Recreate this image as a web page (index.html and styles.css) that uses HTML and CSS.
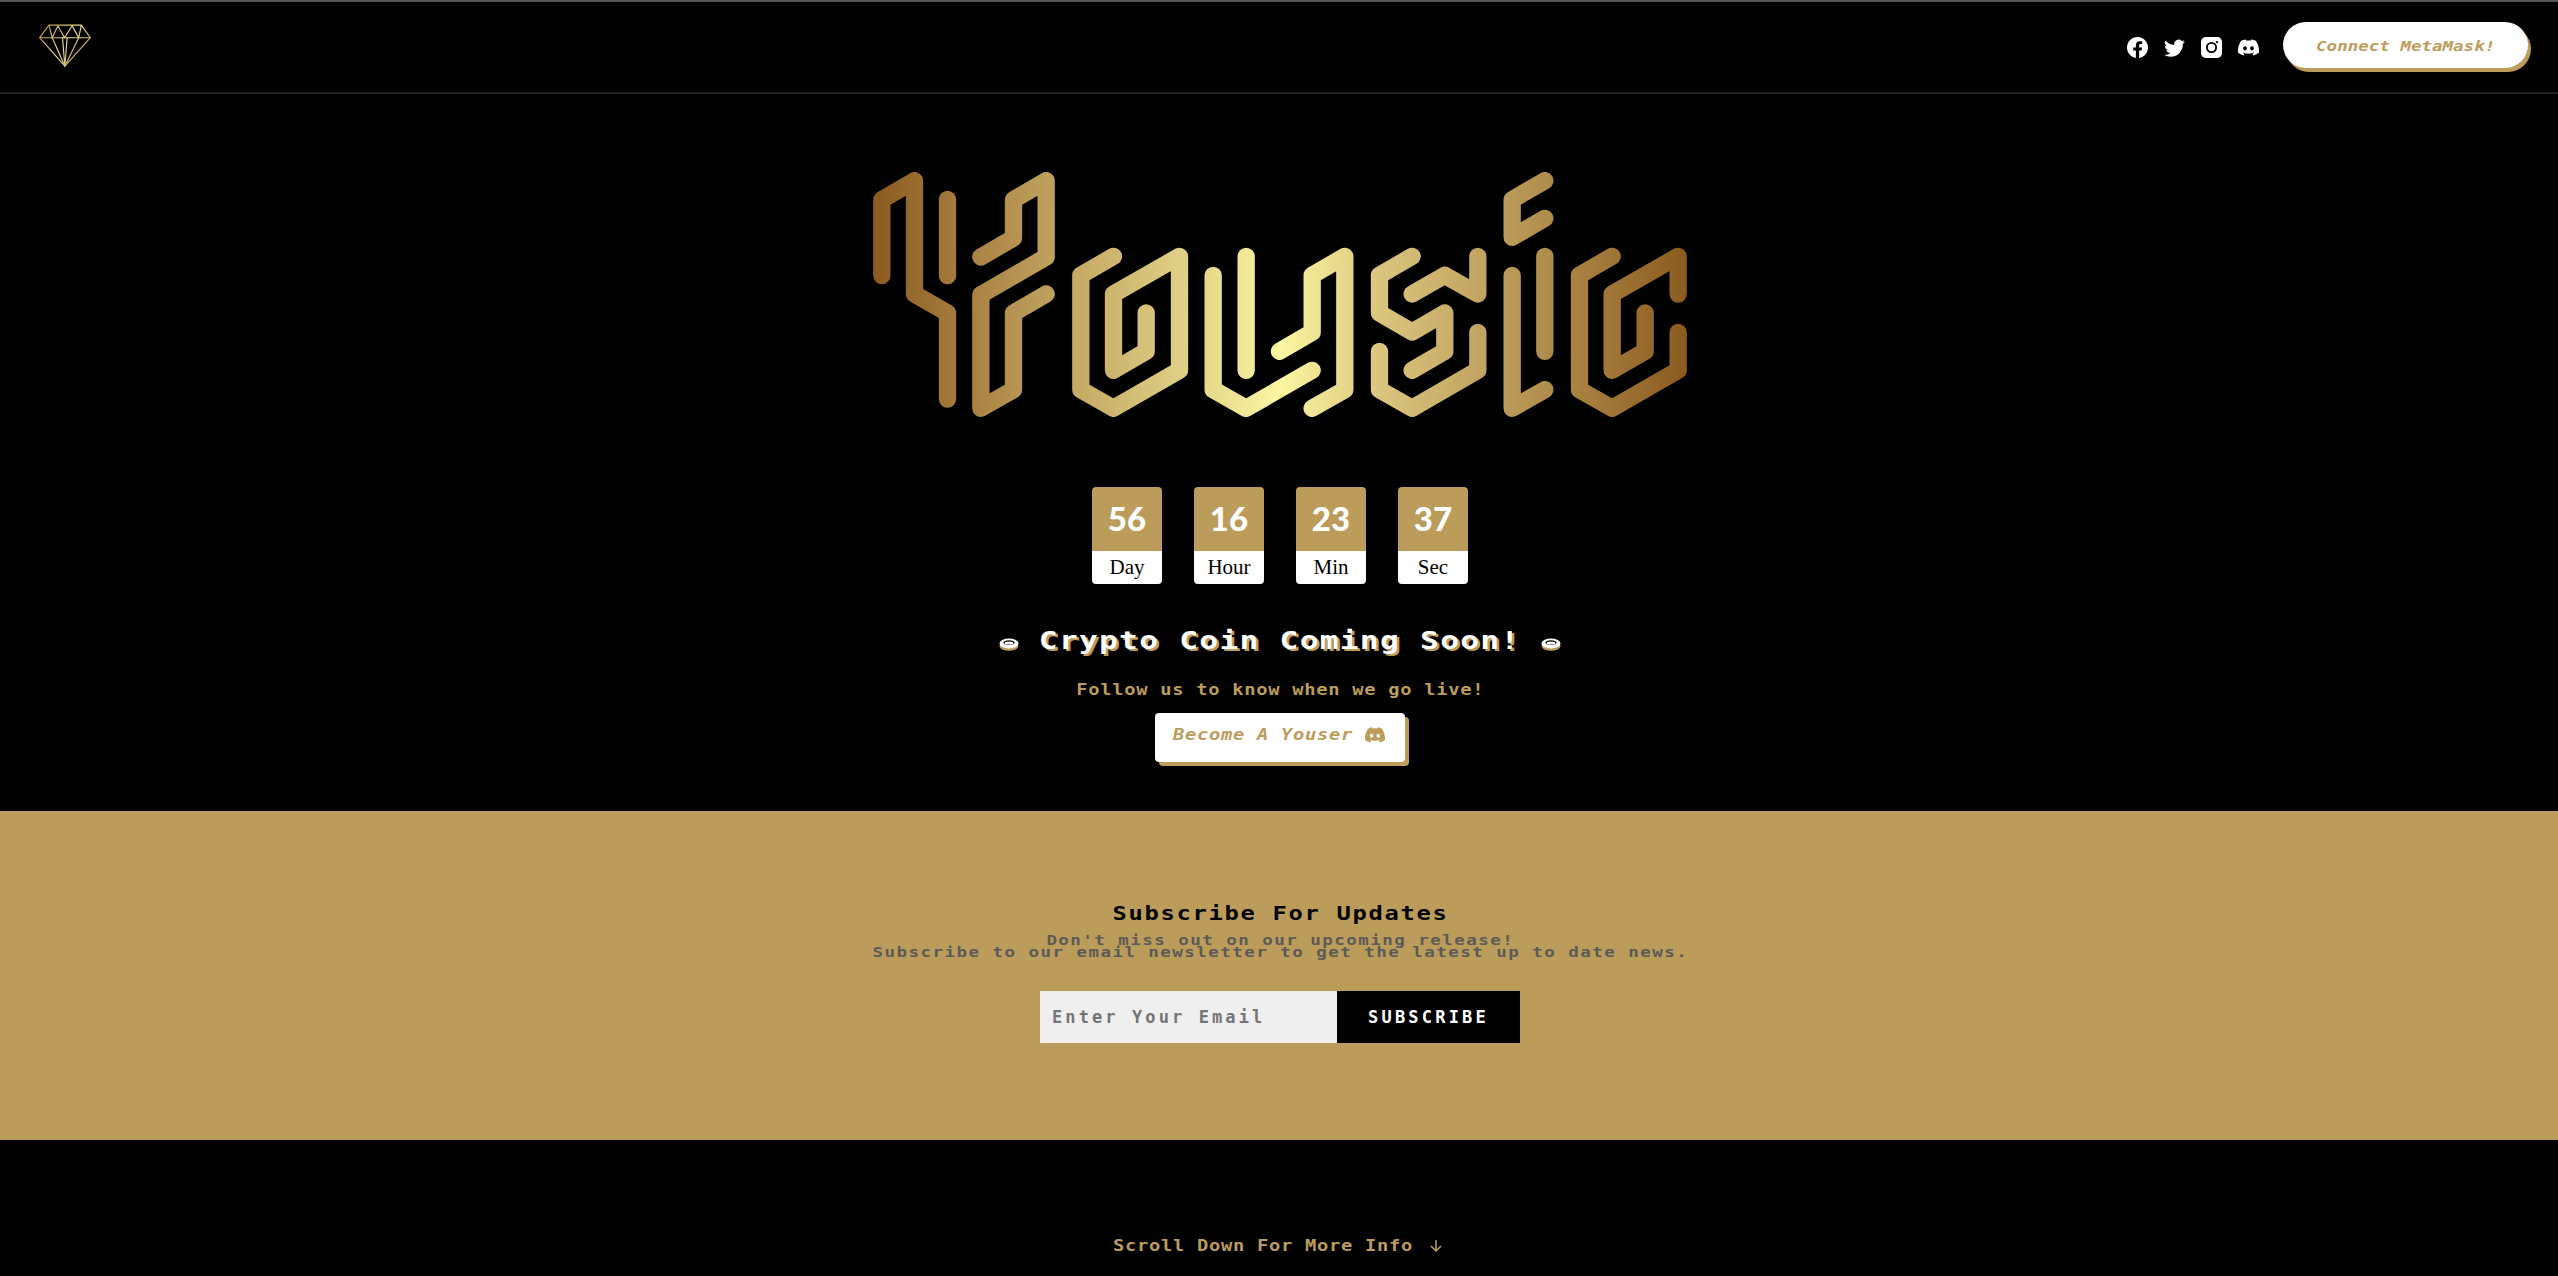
FILE: index.html
```html
<!DOCTYPE html>
<html lang="en">
<head>
    <meta charset="UTF-8">
    <meta name="viewport" content="width=device-width, initial-scale=1.0">
    <title>Yousic</title>
    <link rel="stylesheet" href="styles.css">
</head>
<body>

<svg class="defs" width="0" height="0">
    <defs>
        <linearGradient id="logoGold" gradientUnits="userSpaceOnUse" x1="41" y1="0" x2="2482" y2="0">
            <stop offset="0" stop-color="#8b5a1f"/>
            <stop offset="0.2" stop-color="#bb9b59"/>
            <stop offset="0.38" stop-color="#dfcf85"/>
            <stop offset="0.5" stop-color="#fbf6a1"/>
            <stop offset="0.62" stop-color="#dbc67f"/>
            <stop offset="0.78" stop-color="#bb9b59"/>
            <stop offset="1" stop-color="#8b5a1f"/>
        </linearGradient>
        <linearGradient id="gemGold" gradientUnits="userSpaceOnUse" x1="117" y1="73" x2="270" y2="198">
            <stop offset="0" stop-color="#b08a3e"/>
            <stop offset="0.5" stop-color="#f0e296"/>
            <stop offset="1" stop-color="#a07c34"/>
        </linearGradient>
        <symbol id="discord" viewBox="0 0 16 16">
            <path d="M13.545 2.907a13.227 13.227 0 0 0-3.257-1.011.05.05 0 0 0-.052.025c-.141.25-.297.577-.406.833a12.19 12.19 0 0 0-3.658 0 8.258 8.258 0 0 0-.412-.833.051.051 0 0 0-.052-.025c-1.125.194-2.22.534-3.257 1.011a.041.041 0 0 0-.021.018C.356 6.024-.213 9.047.066 12.032c.001.014.01.028.021.037a13.276 13.276 0 0 0 3.995 2.02.05.05 0 0 0 .056-.019c.308-.42.582-.863.818-1.329a.05.05 0 0 0-.01-.059.051.051 0 0 0-.018-.011 8.875 8.875 0 0 1-1.248-.595.05.05 0 0 1-.02-.066.051.051 0 0 1 .015-.019c.084-.063.168-.129.248-.195a.05.05 0 0 1 .051-.007c2.619 1.196 5.454 1.196 8.041 0a.052.052 0 0 1 .053.007c.08.066.164.132.248.195a.051.051 0 0 1-.004.085 8.254 8.254 0 0 1-1.249.594.05.05 0 0 0-.03.03.052.052 0 0 0 .003.041c.24.465.515.909.817 1.329a.05.05 0 0 0 .056.019 13.235 13.235 0 0 0 4.001-2.02.049.049 0 0 0 .021-.037c.334-3.451-.559-6.449-2.366-9.106a.034.034 0 0 0-.02-.019Zm-8.198 7.307c-.789 0-1.438-.724-1.438-1.612 0-.889.637-1.613 1.438-1.613.807 0 1.45.73 1.438 1.613 0 .888-.637 1.612-1.438 1.612Zm5.316 0c-.788 0-1.438-.724-1.438-1.612 0-.889.637-1.613 1.438-1.613.807 0 1.451.73 1.438 1.613 0 .888-.631 1.612-1.438 1.612Z"/>
        </symbol>
        <symbol id="coin" viewBox="0 0 20 13">
            <ellipse cx="10" cy="8" rx="9.5" ry="4.8" fill="#bc9c5b"/>
            <ellipse cx="10" cy="5.5" rx="9.5" ry="5" fill="#fff"/>
            <ellipse cx="10" cy="4.6" rx="5.6" ry="2.4" fill="#000"/>
            <ellipse cx="10" cy="5" rx="4.4" ry="1.6" fill="#fff"/>
        </symbol>
    </defs>
</svg>

<header class="topbar">
    <svg class="gem" viewBox="115 71 157 129">
        <g fill="none" stroke="url(#gemGold)" stroke-width="3.5" stroke-linejoin="round">
            <path d="M145 74H243L270 112L193 198L117 112Z"/>
            <path d="M117 112H270"/>
            <path d="M145 74L155 112L172 76L192 112L215 76L235 112L243 74"/>
            <path d="M155 112L193 198L235 112"/>
            <path d="M186 112L193 198L200 112"/>
        </g>
    </svg>
    <div class="topbar-right">
        <nav class="socials">
            <svg class="social" viewBox="0 0 16 16"><path d="M16 8.049c0-4.446-3.582-8.05-8-8.05C3.58 0-.002 3.603-.002 8.05c0 4.017 2.926 7.347 6.75 7.951v-5.625h-2.03V8.05H6.75V6.275c0-2.017 1.195-3.131 3.022-3.131.876 0 1.791.157 1.791.157v1.98h-1.009c-.993 0-1.303.621-1.303 1.258v1.51h2.218l-.354 2.326H9.25V16c3.824-.604 6.75-3.934 6.75-7.951z"/></svg>
            <svg class="social" viewBox="0 0 16 16"><path d="M5.026 15c6.038 0 9.341-5.003 9.341-9.334 0-.14 0-.282-.006-.422A6.685 6.685 0 0 0 16 3.542a6.658 6.658 0 0 1-1.889.518 3.301 3.301 0 0 0 1.447-1.817 6.533 6.533 0 0 1-2.087.793A3.286 3.286 0 0 0 7.875 6.03a9.325 9.325 0 0 1-6.767-3.429 3.289 3.289 0 0 0 1.018 4.382A3.323 3.323 0 0 1 .64 6.575v.045a3.288 3.288 0 0 0 2.632 3.218 3.203 3.203 0 0 1-.865.115 3.23 3.23 0 0 1-.614-.057 3.283 3.283 0 0 0 3.067 2.277A6.588 6.588 0 0 1 .78 13.58a6.32 6.32 0 0 1-.78-.045A9.344 9.344 0 0 0 5.026 15z"/></svg>
            <svg class="social" viewBox="0 0 20 20">
                <rect width="20" height="20" rx="4.5" fill="#fff"/>
                <circle cx="10" cy="10" r="4.4" fill="none" stroke="#000" stroke-width="1.8"/>
                <circle cx="15.2" cy="4.8" r="1.1" fill="#000"/>
            </svg>
            <svg class="social"><use href="#discord"/></svg>
        </nav>
        <button class="connect-btn"><span class="wide">Connect MetaMask!</span></button>
    </div>
</header>

<section class="hero">
    <svg class="logo" viewBox="41 67 2441 735">
        <g fill="none" stroke="url(#logoGold)" stroke-width="52" stroke-linecap="round" stroke-linejoin="round">
            <!-- Y -->
            <path d="M67 378V150L165 93V433L264 490V748"/>
            <path d="M264 149V378"/>
            <path d="M364 322L462 265V150L560 93V322L364 435V776L462 720V490L560 433"/>
            <!-- o -->
            <path d="M762 320L664 377V720L762 776L960 662V320L762 433V662L860 605V490"/>
            <!-- u -->
            <path d="M1061 377V720L1160 776L1358 662"/>
            <path d="M1160 320V662"/>
            <path d="M1260 605L1358 548V377L1456 320V720L1358 776"/>
            <!-- s -->
            <path d="M1658 320L1560 377V490L1658 547L1756 490V605L1658 662"/>
            <path d="M1658 433L1756 377L1855 433V320"/>
            <path d="M1560 605V720L1658 776L1855 662V548"/>
            <!-- i -->
            <path d="M2056 93L1958 150V263L2056 206"/>
            <path d="M1958 377V776L2056 720"/>
            <path d="M2056 320V605"/>
            <!-- c -->
            <path d="M2258 320L2160 377V720L2258 776L2456 662V548"/>
            <path d="M2456 433V320L2258 433V662L2357 605V490"/>
        </g>
    </svg>

    <div class="countdown">
        <div class="count-card"><span class="count-num">56</span><span class="count-label">Day</span></div>
        <div class="count-card"><span class="count-num">16</span><span class="count-label">Hour</span></div>
        <div class="count-card"><span class="count-num">23</span><span class="count-label">Min</span></div>
        <div class="count-card"><span class="count-num">37</span><span class="count-label">Sec</span></div>
    </div>

    <h1 class="coming">
        <svg class="coin"><use href="#coin"/></svg>
        <span class="wide">Crypto Coin Coming Soon!</span>
        <svg class="coin"><use href="#coin"/></svg>
    </h1>
    <p class="follow wide">Follow us to know when we go live!</p>
    <button class="join-btn"><span class="wide">Become A Youser</span><svg class="join-icon"><use href="#discord"/></svg></button>
</section>

<section class="subscribe">
    <h2 class="wide">Subscribe For Updates</h2>
    <p class="wide">Don't miss out on our upcoming release!<br>Subscribe to our email newsletter to get the latest up to date news.</p>
    <form class="sub-form">
        <input type="email" placeholder="Enter Your Email">
        <button type="button">SUBSCRIBE</button>
    </form>
</section>

<div class="scroll-more">
    <span class="wide">Scroll Down For More Info</span>
    <svg class="arrow" viewBox="0 0 12 12"><path d="M6 0V11M1 6L6 11L11 6"/></svg>
</div>

</body>
</html>
```

FILE: styles.css
```css
* {
    box-sizing: border-box;
}
html, body {
    margin: 0;
    height: 100%;
    overflow: hidden;
}
body {
    background-color: #000;
    font-family: "DejaVu Sans Mono", monospace;
    color: #bc9c5b;
}
.defs {
    display: block;
    height: 0;
}
/* no wide pixel font here, so the mono face gets stretched */
.wide {
    display: inline-block;
    transform: scaleX(1.25);
}

/* top bar */
.topbar {
    display: flex;
    justify-content: space-between;
    align-items: center;
    height: 94px;
    padding: 0 30px 0 39px;
    border-top: 2px solid #555;
    border-bottom: 2px solid #222;
}
.gem {
    width: 52px;
    height: 43px;
    margin-bottom: 3px;
}
.topbar-right {
    display: flex;
    align-items: center;
    gap: 24px;
}
.socials {
    display: flex;
    align-items: center;
    gap: 16px;
}
.social {
    width: 21px;
    height: 21px;
    fill: #fff;
}
.connect-btn {
    width: 245px;
    height: 46px;
    margin-bottom: 4px;
    padding: 2px 0 0;
    border: none;
    border-radius: 23px;
    background-color: #fff;
    box-shadow: 3px 4px 0 #bc9c5b;
    color: #bc9c5b;
    font-family: inherit;
    font-size: 14px;
    font-style: italic;
    font-weight: bold;
    letter-spacing: 0;
}

/* hero */
.hero {
    display: flex;
    flex-direction: column;
    align-items: center;
    height: 717px;
    padding: 78px 0 0 2px;
}
.logo {
    display: block;
    width: 814px;
    height: 245px;
}
.countdown {
    display: flex;
    gap: 32px;
    margin-top: 70px;
}
.count-card {
    display: flex;
    flex-direction: column;
    width: 70px;
    height: 97px;
    border-radius: 4px;
    overflow: hidden;
    text-align: center;
}
.count-num {
    height: 64px;
    background-color: #bc9c5b;
    color: #fff;
    font-family: Lato, sans-serif;
    font-size: 33px;
    font-weight: 900;
    line-height: 62px;
}
.count-label {
    height: 33px;
    background-color: #fff;
    color: #000;
    font-family: "Liberation Serif", serif;
    font-size: 21px;
    line-height: 32px;
}
.coming {
    display: flex;
    align-items: center;
    gap: 68px;
    height: 30px;
    margin: 42px 0 0;
    color: #fff;
    font-size: 25px;
    font-weight: bold;
    line-height: 30px;
    text-shadow: 2px 2px 0 #bc9c5b;
}
.coming .wide {
    letter-spacing: 1px;
}
.coin {
    width: 20px;
    height: 13px;
    margin-top: 6px;
}
.follow {
    height: 20px;
    margin: 24px 0 0;
    font-size: 15px;
    font-weight: bold;
    letter-spacing: 0.57px;
    line-height: 20px;
}
.join-btn {
    display: flex;
    align-items: center;
    width: 250px;
    height: 49px;
    margin-top: 13px;
    padding: 0 0 6px 18px;
    border: none;
    border-radius: 4px;
    background-color: #fff;
    box-shadow: 4px 4px 0 #bc9c5b;
    color: #bc9c5b;
    font-family: inherit;
    font-size: 15px;
    font-style: italic;
    font-weight: bold;
    letter-spacing: 0.57px;
}
.join-btn .wide {
    transform-origin: left center;
}
.join-icon {
    width: 20px;
    height: 20px;
    margin-left: 48px;
    fill: #bc9c5b;
}

/* subscribe */
.subscribe {
    height: 329px;
    padding: 90px 0 0 2px;
    background-color: #bc9c5b;
    text-align: center;
}
.subscribe h2 {
    display: block;
    width: fit-content;
    margin: 0 auto;
    color: #000;
    font-size: 19px;
    letter-spacing: 1.36px;
    line-height: 24px;
}
.subscribe p {
    display: block;
    width: fit-content;
    margin: 9px auto 0;
    color: #5c5a55;
    font-size: 14px;
    font-weight: bold;
    letter-spacing: 1.17px;
    line-height: 12px;
}
.sub-form {
    display: flex;
    justify-content: center;
    height: 52px;
    margin-top: 33px;
}
.sub-form input {
    width: 297px;
    padding: 0 12px;
    border: none;
    border-radius: 0;
    background-color: #efefef;
    font-family: inherit;
    font-size: 17px;
    font-weight: bold;
    letter-spacing: 3.1px;
}
.sub-form input::placeholder {
    color: #757575;
    opacity: 1;
}
.sub-form button {
    width: 183px;
    border: none;
    background-color: #000;
    color: #fff;
    font-family: inherit;
    font-size: 17px;
    font-weight: bold;
    letter-spacing: 3.2px;
}

/* scroll hint */
.scroll-more {
    display: flex;
    justify-content: center;
    align-items: center;
    gap: 47px;
    height: 20px;
    margin-top: 96px;
    padding-left: 27px;
    font-size: 15px;
    font-weight: bold;
    letter-spacing: 0.57px;
    line-height: 20px;
}
.arrow {
    width: 12px;
    height: 12px;
    fill: none;
    stroke: #bc9c5b;
    stroke-width: 1.5;
}
```
